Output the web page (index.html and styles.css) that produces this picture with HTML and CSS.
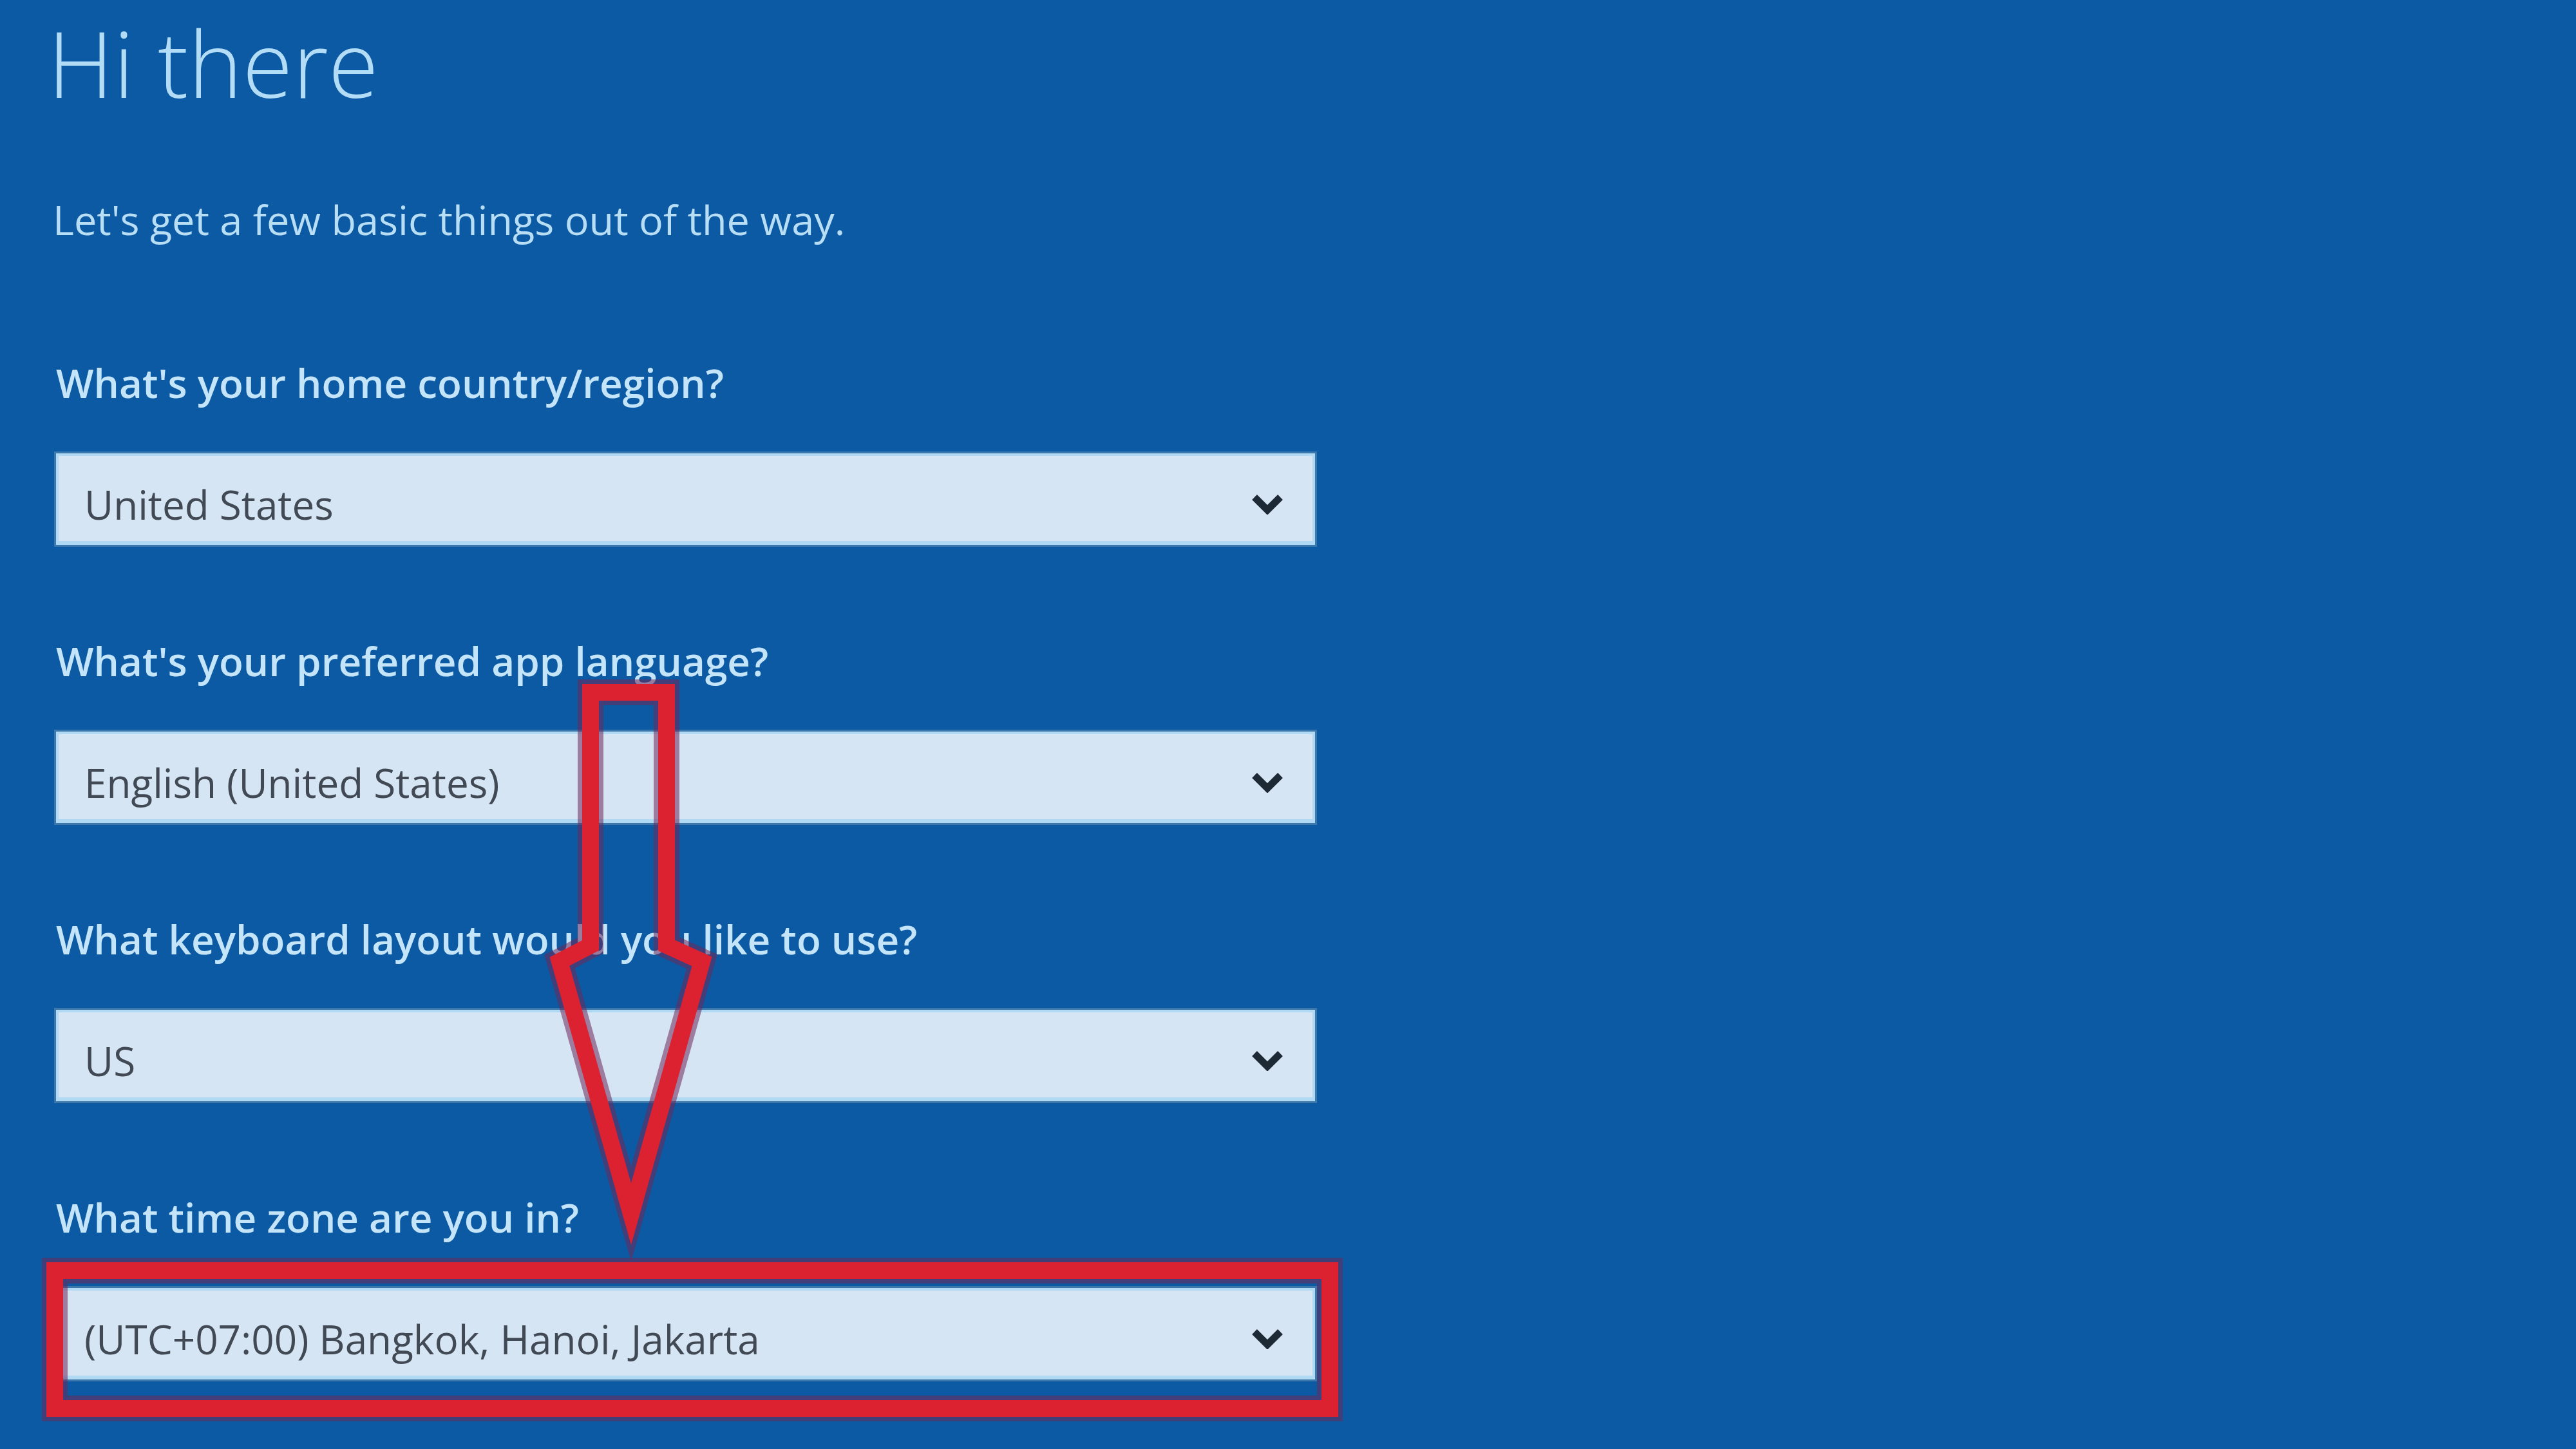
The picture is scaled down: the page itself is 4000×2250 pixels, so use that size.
FILE: index.html
```html
<!DOCTYPE html>
<html>
  <head>
    <link rel="stylesheet" href="styles.css">
  </head>
  <body>
    <main class="setup">
      <h1 class="title">Hi there</h1>
      <p class="intro">Let's get a few basic things out of the way.</p>

      <div class="field">
        <label class="field-label">What's your home country/region?</label>
        <div class="select">
          <span>United States</span>
          <svg class="chevron" viewBox="0 0 50 32"><polyline points="5,5 25,25 45,5" /></svg>
        </div>
      </div>

      <div class="field">
        <label class="field-label">What's your preferred app language?</label>
        <div class="select">
          <span>English (United States)</span>
          <svg class="chevron" viewBox="0 0 50 32"><polyline points="5,5 25,25 45,5" /></svg>
        </div>
      </div>

      <div class="field">
        <label class="field-label">What keyboard layout would you like to use?</label>
        <div class="select">
          <span>US</span>
          <svg class="chevron" viewBox="0 0 50 32"><polyline points="5,5 25,25 45,5" /></svg>
        </div>
      </div>

      <div class="field">
        <label class="field-label">What time zone are you in?</label>
        <div class="select">
          <span>(UTC+07:00) Bangkok, Hanoi, Jakarta</span>
          <svg class="chevron" viewBox="0 0 50 32"><polyline points="5,5 25,25 45,5" /></svg>
        </div>
      </div>
    </main>

    <!-- red annotation drawn over the screen -->
    <svg class="markup" viewBox="0 0 4000 2250">
      <g class="halo">
        <path d="M917 1075 L917 1468 L869 1493 L980 1885 L1090 1493 L1035 1468 L1035 1075 Z" />
        <rect x="85" y="1973" width="1980" height="214" />
      </g>
      <g class="ink">
        <path d="M917 1075 L917 1468 L869 1493 L980 1885 L1090 1493 L1035 1468 L1035 1075 Z" />
        <rect x="85" y="1973" width="1980" height="214" />
      </g>
    </svg>
  </body>
</html>
```

FILE: styles.css
```css
* {
  margin: 0;
  padding: 0;
  box-sizing: border-box;
}

body {
  position: relative;
  width: 4000px;
  height: 2250px;
  overflow: hidden;
  background: #0c5aa3;
  font-family: "Open Sans", "Noto Sans", sans-serif;
}

.setup {
  width: 2042px;
  padding-left: 87px;
}

.title {
  margin-left: -13px;
  font-size: 142px;
  line-height: 194px;
  font-weight: 300;
  color: #b3ddf7;
}

.intro {
  margin: 115px 0 0 -5px;
  font-size: 63px;
  line-height: 63px;
  color: #b8def6;
}

.field {
  margin-top: 149px;
}

.intro + .field {
  margin-top: 191px;
}

.field-label {
  display: block;
  font-size: 62px;
  line-height: 62px;
  font-weight: 600;
  color: #c4e5f9;
}

.select {
  display: flex;
  align-items: center;
  justify-content: space-between;
  height: 142px;
  margin-top: 79px;
  padding: 18px 45px 0 40px;
  background: #d6e5f3;
  border: 4px solid #b0d9f4;
  border-bottom-width: 6px;
  box-shadow: 0 0 0 3px #3d78ad;
  font-size: 62px;
  line-height: 62px;
  color: #414a54;
}

.chevron {
  width: 50px;
  height: 32px;
}

.chevron polyline {
  fill: none;
  stroke: #1d2935;
  stroke-width: 11;
}

.markup {
  position: absolute;
  top: 0;
  left: 0;
  width: 4000px;
  height: 2250px;
  pointer-events: none;
}

.markup path,
.markup rect {
  fill: none;
  stroke-linejoin: miter;
}

.halo path,
.halo rect {
  stroke: rgba(110, 40, 90, 0.55);
  stroke-width: 40;
}

.ink path,
.ink rect {
  stroke: #dc2230;
  stroke-width: 26;
}
```
